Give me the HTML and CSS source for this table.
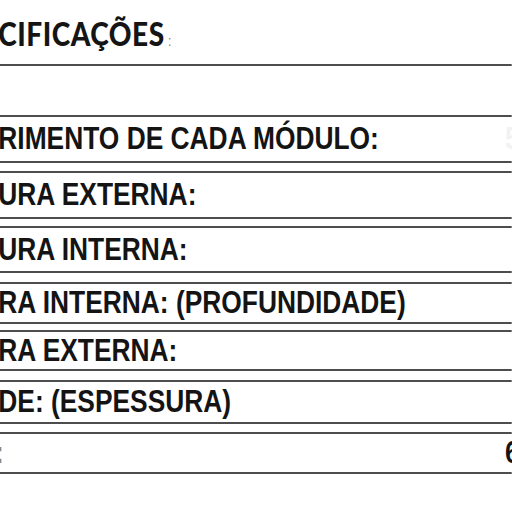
FILE: index.html
```html
<!DOCTYPE html>
<html lang="pt">
<head>
<meta charset="utf-8">
<title>Especificações</title>
<link rel="stylesheet" href="styles.css">
</head>
<body>
<div class="page">
  <h1 class="title">CIFICAÇÕES<span class="colon">:</span></h1>
  <div class="box empty"></div>
  <div class="row r1 first"><span class="label">RIMENTO DE CADA MÓDULO:</span><span class="value faint">5</span></div>
  <div class="row r2"><span class="label">URA EXTERNA:</span><span class="value faint"></span></div>
  <div class="row r3"><span class="label">URA INTERNA:</span><span class="value faint"></span></div>
  <div class="row r4"><span class="label">RA INTERNA: (PROFUNDIDADE)</span><span class="value faint"></span></div>
  <div class="row r5"><span class="label">RA EXTERNA:</span><span class="value faint"></span></div>
  <div class="row r6"><span class="label">DE: (ESPESSURA)</span><span class="value faint"></span></div>
  <div class="row r7"><span class="label cut">:</span><span class="value">6</span></div>
</div>
</body>
</html>
```

FILE: styles.css
```css
html, body {
  margin: 0;
  padding: 0;
  background: #ffffff;
  overflow: hidden;
  width: 512px;
  height: 512px;
}

.page {
  width: 602px;
  transform: scaleX(0.85);
  transform-origin: left top;
  font-family: "Liberation Sans", Arial, sans-serif;
  color: #141414;
}

.title {
  margin: 0;
  height: 64px;
  box-sizing: border-box;
  padding-top: 14px;
  font-family: Lato, "Open Sans", sans-serif;
  font-weight: 900;
  font-size: 33px;
  line-height: 38px;
  letter-spacing: 0.6px;
  margin-left: -2px;
  color: #151515;
}

.colon {
  font-family: "Liberation Sans", Arial, sans-serif;
  font-weight: 400;
  font-size: 14px;
  color: #777;
  margin-left: 4px;
  letter-spacing: 0;
}

.box {
  border-top: 2px solid #4d4d4d;
  border-bottom: 2px solid #4d4d4d;
}

.empty {
  height: 49px;
}

.row {
  display: grid;
  grid-template-columns: 594px auto;
  align-items: center;
  border-top: 2px solid #4d4d4d;
  border-bottom: 2px solid #4d4d4d;
  font-weight: 700;
  font-size: 31px;
  line-height: 36px;
  white-space: nowrap;
}

.row.first {
  border-top: none;
}

.label {
  margin-left: -2px;
}

.label.cut {
  margin-left: -6px;
  color: #888;
}

.value.faint {
  color: #f2f2f2;
}

.r1 { height: 44px; }
.r2 { height: 44px; margin-top: 8px; }
.r3 { height: 43px; margin-top: 7px; }
.r4 { height: 38px; margin-top: 9px; }
.r5 { height: 37px; margin-top: 6px; }
.r6 { height: 40px; margin-top: 9px; }
.r7 { height: 38px; margin-top: 8px; }
```
